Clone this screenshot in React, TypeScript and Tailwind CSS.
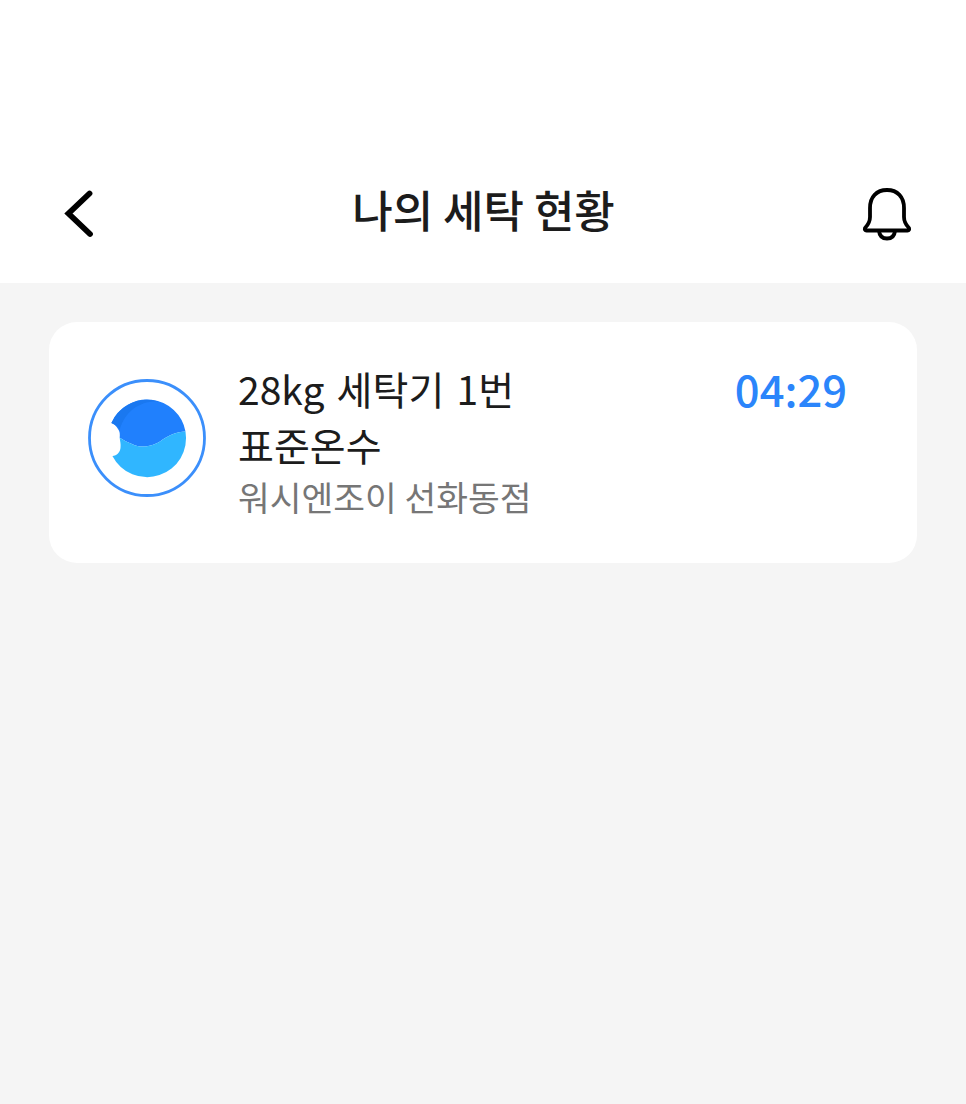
const font = { fontFamily: '"Noto Sans CJK KR", sans-serif' };

function Logo() {
  return (
    <svg width="120" height="120" viewBox="0 0 120 120" className="shrink-0">
      <circle cx="60" cy="60" r="57.5" fill="#fff" stroke="#3b8ffb" strokeWidth="2.8" />
      <g transform="translate(0 20)">
        <path d="M24.400 25A39 39 0 0 1 98.500 33.500C90 34 82 37 75 42C67 48 55 51 45 46C40 44 36 42 32.700 39.800C33 36 33 34 31 31C29.500 28 27 26 24.400 25Z" fill="#2080fd" />
        <path d="M32.700 39.800C36 42 40 44 45 46C55 51 67 48 75 42C82 37 90 34 98.500 33.500A39 39 0 0 1 25.400 58C30 58 33 54 33.500 50C34 46 33 43 32.700 39.800Z" fill="#30b6ff" />
        <path d="M24.400 25A39 39 0 0 1 72 3.600C55 2 38 12 32.700 32C31 28 27 26 24.400 25Z" fill="#1a78f0" />
      </g>
    </svg>
  );
}

export default function App() {
  return (
    <div className="flex h-[1104px] w-[966px] flex-col overflow-hidden bg-[#f5f5f5]" style={font}>
      <header className="flex h-[283px] items-end justify-between bg-white pb-[42px] pl-[62px] pr-[54px]">
        <svg width="38" height="56" viewBox="0 0 38 56" fill="none" stroke="#000" strokeWidth="5.800" strokeLinecap="round" strokeLinejoin="miter">
          <path d="M27.500 8.500L6.500 28.500L28 49" />
        </svg>
        <h1 className="ml-[5px] pb-[2px] text-[44px] font-medium leading-[60px] text-[#1c1c1c]">나의 세탁 현황</h1>
        <svg width="50" height="54" viewBox="0 0 50 54" fill="none" stroke="#000" strokeWidth="3.800" strokeLinejoin="round" strokeLinecap="round">
          <path d="M3 41C6 38 8 35.500 8 30V21C8 10 14.500 3 25 3C35.500 3 42 10 42 21V30C42 35.500 44 38 47 41C47.500 42.500 47 43.500 45.500 43.500H4.500C3 43.500 2.500 42.500 3 41Z" />
          <path d="M17 44C17.500 49 20.500 51.500 25 51.500C29.500 51.500 32.500 49 33 44" />
        </svg>
      </header>
      <main className="px-[49px] pt-[39px]">
        <section className="flex h-[241px] items-start rounded-[28px] bg-white pl-[38px] pr-[70px] pt-[56px]">
          <Logo />
          <div className="-mt-[18px] ml-[31px] flex-1">
            <div className="text-[39px] leading-[56px] text-[#1c1c1c] [word-spacing:3.5px]">28kg 세탁기 1번</div>
            <div className="text-[39px] leading-[56px] text-[#1c1c1c]">표준온수</div>
            <div className="text-[34.500px] leading-[48px] text-[#767676]">워시엔조이 선화동점</div>
          </div>
          <div className="-mt-[17px] text-[43.500px] font-medium leading-[56px] text-[#2b85fb]">04:29</div>
        </section>
      </main>
    </div>
  );
}
